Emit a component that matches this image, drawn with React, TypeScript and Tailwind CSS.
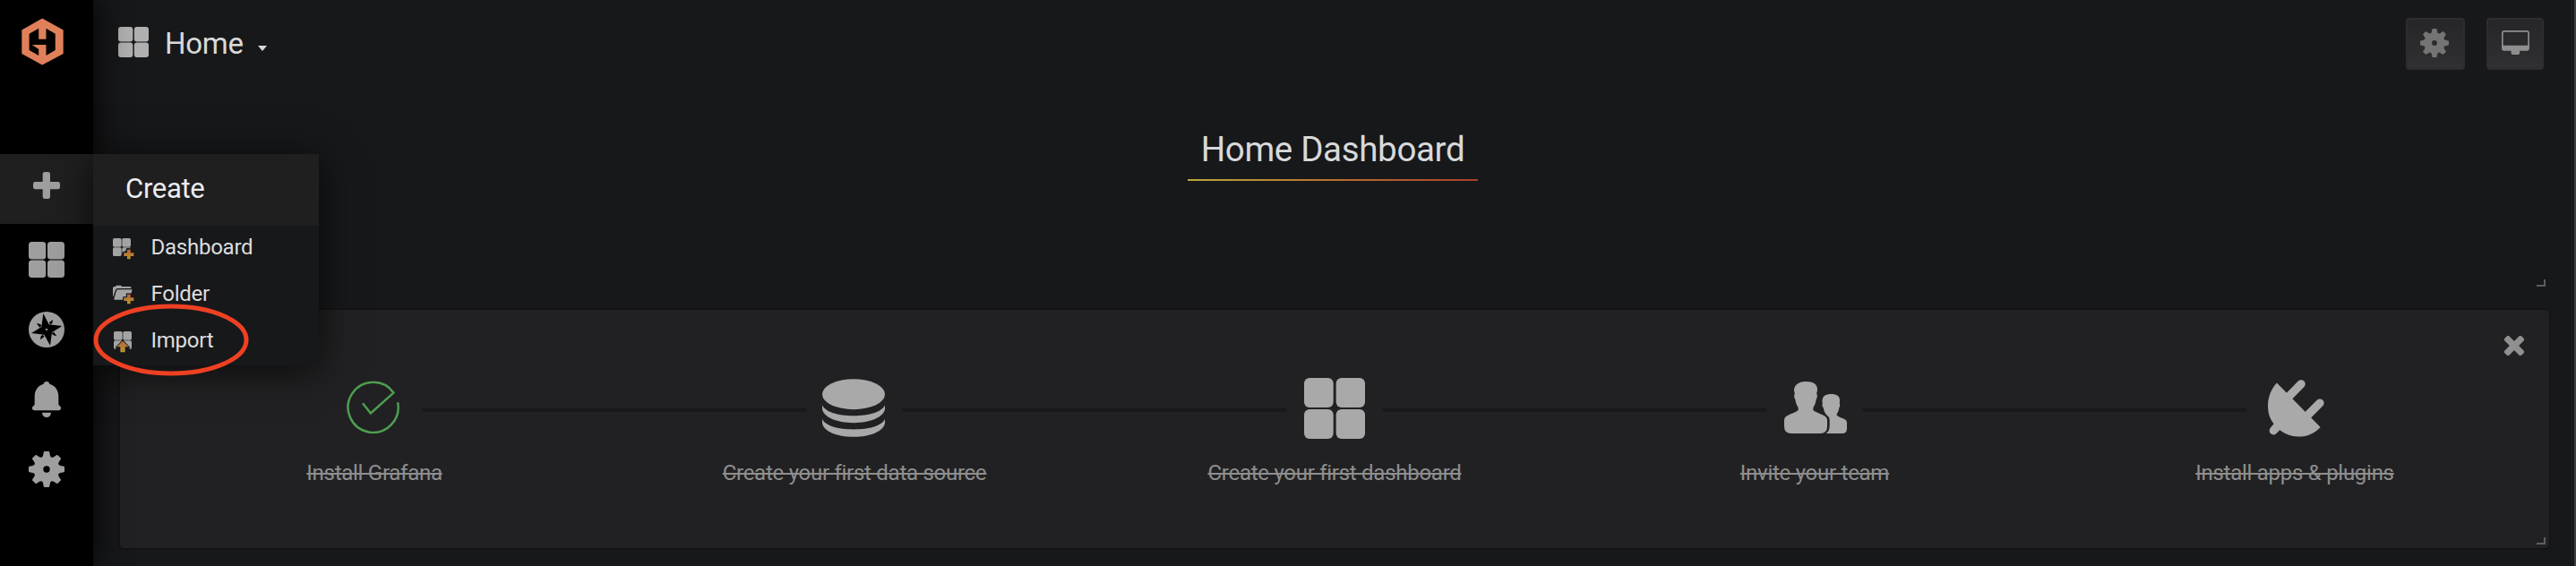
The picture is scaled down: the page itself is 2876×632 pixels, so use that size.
import type { ReactNode } from "react";

function GridIcon({ className }: { className: string }) {
  return (
    <svg viewBox="0 0 204 204" className={className} fill="currentColor">
      <rect x="0" y="0" width="98" height="99" rx="18" />
      <rect x="107" y="0" width="97" height="99" rx="18" />
      <rect x="0" y="105" width="98" height="99" rx="18" />
      <rect x="107" y="105" width="97" height="99" rx="18" />
    </svg>
  );
}

const TEETH = [0, 45, 90, 135, 180, 225, 270, 315];

function GearIcon({ className, id }: { className: string; id: string }) {
  return (
    <svg viewBox="-60 -60 120 120" className={className} fill="currentColor">
      <mask id={id}>
        <rect x="-60" y="-60" width="120" height="120" fill="white" />
        <circle r="11" fill="black" />
      </mask>
      <g mask={`url(#${id})`}>
        <circle r="42" />
        {TEETH.map((a) => (
          <path
            key={a}
            transform={`rotate(${a})`}
            d="M-7-60H7Q9-60 9.500-58L12-46Q13-42 17-39L0-20L-17-39Q-13-42-12-46L-9.500-58Q-9-60-7-60Z"
          />
        ))}
      </g>
    </svg>
  );
}

function Logo() {
  return (
    <svg viewBox="71 60 142 159" className="h-[53px] w-[47px]">
      <path
        fill="#e0805a"
        fillRule="evenodd"
        d="M141 61L212 100V180L141 218L72 180V100ZM129 131H154V95L185 113V168L154 186V150H107L129 165V186L97 168V113L129 95Z"
      />
    </svg>
  );
}

function PlusIcon() {
  return (
    <svg viewBox="0 0 90 90" className="h-[30px] w-[30px]" fill="currentColor">
      <rect x="32" y="0" width="25" height="90" rx="7" />
      <rect x="0" y="33" width="90" height="25" rx="7" />
    </svg>
  );
}

function CompassIcon() {
  return (
    <svg viewBox="96 24 120 120" className="h-10 w-10">
      <circle cx="156" cy="84" r="60" fill="currentColor" />
      <g fill="#000">
        <path d="M145 30L164 67L208 72L174 94L168 137L148 101L105 96L139 75Z" />
        <path d="M177 51L175 63L168 67L165 60Z" />
        <path d="M122 63L135 66L139 71L133 77Z" />
        <path d="M190 106L179 103L173 97L180 92Z" />
        <path d="M135 118L137 106L144 101L148 108Z" />
      </g>
      <circle cx="156" cy="84" r="3.500" fill="currentColor" />
    </svg>
  );
}

function BellIcon() {
  return (
    <svg viewBox="96 258 120 120" className="h-10 w-10" fill="currentColor">
      <path d="M156 258C161 258 165 261 166 266C186 272 196 288 196 308V332Q196 339 200 340A8 8 0 0 1 197 355H115A8 8 0 0 1 112 340Q116 339 116 332V308C116 288 126 272 146 266C147 261 151 258 156 258Z" />
      <path d="M141 362H171A15 16 0 0 1 141 362Z" />
    </svg>
  );
}

function MonitorIcon() {
  return (
    <svg viewBox="0 0 94 82" className="h-[27px] w-[31px]">
      <path
        fill="currentColor"
        fillRule="evenodd"
        d="M9 0H85Q94 0 94 9V60Q94 69 85 69H61V77Q61 82 56 82H37Q32 82 32 77V69H9Q0 69 0 60V9Q0 0 9 0ZM9 5Q5 5 5 9V51H89V9Q89 5 85 5Z"
      />
    </svg>
  );
}

function AccentGradient({ id }: { id: string }) {
  return (
    <linearGradient id={id} x1="0" y1="0" x2="0" y2="1">
      <stop offset="0" stopColor="#b8663e" />
      <stop offset="1" stopColor="#b6942f" />
    </linearGradient>
  );
}

function SmallPlus({ id }: { id: string }) {
  return (
    <>
      <AccentGradient id={id} />
      <path
        d="M48 38H59V49H70V60H59V70H48V60H37V49H48Z"
        fill={`url(#${id})`}
        stroke="#17181a"
        strokeWidth="7"
        paintOrder="stroke"
      />
    </>
  );
}

function NewDashboardIcon() {
  return (
    <svg viewBox="0 0 72 72" className="h-6 w-6" fill="#a3a3a3">
      <rect x="0" y="0" width="29" height="29" rx="5" />
      <rect x="31" y="0" width="29" height="29" rx="5" />
      <rect x="0" y="31" width="29" height="29" rx="5" />
      <path d="M36 31H55Q60 31 60 34H46L43 43L34 46L31 52V36Q31 31 36 31Z" />
      <SmallPlus id="accent-dashboard" />
    </svg>
  );
}

function NewFolderIcon() {
  return (
    <svg viewBox="0 0 72 72" className="-mt-1 h-6 w-6">
      <path
        fill="#a3a3a3"
        d="M5 12H8L12 8H27L31 12H57Q62 12 62 18H16Q11 18 9 23L1 46Q0 46 0 42V17Q0 12 5 12Z"
      />
      <path fill="#a3a3a3" d="M18 22H65L57 52Q56 56 51 56H6Q3 56 4 52L12 26Q13 22 18 22Z" />
      <SmallPlus id="accent-folder" />
    </svg>
  );
}

function ImportIcon() {
  return (
    <svg viewBox="-3 0 72 72" className="h-6 w-6" fill="#a3a3a3">
      <rect x="0" y="0" width="29" height="29" rx="5" />
      <rect x="31" y="0" width="29" height="29" rx="5" />
      <path d="M5 31H24Q29 31 28 35L9 54Q6 57 6 60Q0 60 0 55V36Q0 31 5 31Z" />
      <path d="M55 31H36Q31 31 32 35L51 54Q54 57 54 60Q60 60 60 55V36Q60 31 55 31Z" />
      <AccentGradient id="accent-import" />
      <path
        d="M30 32L50 52H38V70H22V52H10Z"
        fill="url(#accent-import)"
        stroke="#17181a"
        strokeWidth="5"
        paintOrder="stroke"
      />
    </svg>
  );
}

function CheckIcon() {
  return (
    <svg viewBox="201 74 178 178" className="h-[59px] w-[59px]" fill="none" stroke="#4f9e50" strokeWidth="7.500">
      <path d="M373 147A84.500 84.500 0 1 1 359 115L282 184L255 150" />
    </svg>
  );
}

function DatabaseIcon() {
  return (
    <svg viewBox="414 69 210 194" className="h-[65px] w-[70px]" fill="currentColor">
      <ellipse cx="519" cy="120" rx="105" ry="51" />
      <path d="M414 156C424 179 466 192 519 192S614 179 624 156V169C621 196 576 216 519 216S417 196 414 169Z" />
      <path d="M414 203C424 226 466 238 519 238S614 226 624 203V216C621 243 576 263 519 263S417 243 414 216Z" />
    </svg>
  );
}

function UsersIcon() {
  return (
    <svg viewBox="276 78 210 174" className="h-[58px] w-[70px]" fill="currentColor">
      <path d="M348 78C374 78 387 88 387 104C387 110 386 114 384 118C388 122 387 133 383 138C381 151 378 158 373 166V174C382 182 397 185 410 193Q420 199 420 208V228Q420 252 396 252H300Q276 252 276 228V208Q276 199 286 193C299 185 314 182 323 174V166C318 158 315 151 313 138C309 133 308 122 312 118C310 114 309 110 309 104C311 92 322 78 348 78Z" />
      <path d="M433 120C452 120 462 127 462 140C462 145 462 148 461 151C464 155 463 162 460 166C459 175 456 181 452 187V191C458 196 468 199 478 204Q486 208 486 215V236Q486 252 470 252H416Q428 244 428 228V208Q428 196 419 191C413 186 409 177 407 166C403 162 402 155 405 151C403 147 403 142 404 138C406 127 415 120 433 120Z" />
    </svg>
  );
}

function PlugIcon() {
  return (
    <svg viewBox="336 70 190 192" className="h-[64px] w-[63px]" fill="currentColor">
      <path d="M366 80L513 229C492 252 464 262 437 261C414 260 394 253 376 239L363 252C354 259 341 253 341 241Q341 236 345 231L356 218C342 200 336 181 336 156C337 127 346 102 366 80Z" />
      <g stroke="currentColor" strokeWidth="28" strokeLinecap="round">
        <path d="M400 133L448 84" />
        <path d="M463 196L511 148" />
      </g>
    </svg>
  );
}

function CloseIcon() {
  return (
    <svg viewBox="0 0 66 66" className="h-[22px] w-[22px]" fill="#909091">
      <rect x="-7" y="22" width="80" height="22" rx="6" transform="rotate(45 33 33)" />
      <rect x="-7" y="22" width="80" height="22" rx="6" transform="rotate(-45 33 33)" />
    </svg>
  );
}

function ResizeHandle({ className }: { className: string }) {
  return <span className={`absolute h-2 w-2.5 border-r-2 border-b-2 border-[#5c5d5e] ${className}`} />;
}

function SideItem({ children, active }: { children: ReactNode; active?: boolean }) {
  return (
    <div
      className={`flex h-[78px] items-center justify-center text-[#9f9f9f] ${
        active ? "bg-[#1f1f1f] pb-2" : "pt-0.5"
      }`}
    >
      {children}
    </div>
  );
}

function MenuItem({ icon, label }: { icon: ReactNode; label: string }) {
  return (
    <div className="flex h-[52px] items-center gap-[18.5px] pl-[22px]">
      {icon}
      <span className="pb-1 text-[24px] leading-7 tracking-[-0.25px] text-[#dcddde]">{label}</span>
    </div>
  );
}

const STEPS = [
  { label: "Install Grafana", icon: <CheckIcon />, shift: "-ml-[3px] pb-2" },
  { label: "Create your first data source", icon: <DatabaseIcon />, shift: "-ml-[2px] pb-[5px]" },
  { label: "Create your first dashboard", icon: <GridIcon className="h-[68px] w-[68px]" />, shift: "pb-1" },
  { label: "Invite your team", icon: <UsersIcon />, shift: "ml-[2px] pb-1.5" },
  { label: "Install apps & plugins", icon: <PlugIcon />, shift: "ml-[3px] pb-[5px]" },
];

export default function App() {
  return (
    <div className="relative flex h-[632px] w-[2876px] overflow-hidden bg-[#17181a] font-['Roboto',sans-serif]">
      <aside className="relative z-10 flex w-[104px] shrink-0 flex-col bg-black shadow-[0_0_40px_#000]">
        <div className="h-[172px] pl-6 pt-5">
          <Logo />
        </div>
        <SideItem active>
          <PlusIcon />
        </SideItem>
        <SideItem>
          <GridIcon className="h-10 w-10" />
        </SideItem>
        <SideItem>
          <CompassIcon />
        </SideItem>
        <SideItem>
          <BellIcon />
        </SideItem>
        <SideItem>
          <GearIcon id="gear-side" className="h-10 w-10" />
        </SideItem>

        <div className="absolute left-[104px] top-[172px] h-[236px] w-[252px] bg-[#17181a] shadow-[0_5px_40px_#000000b0]">
          <div className="flex h-20 items-center bg-[#1f1f1f] pb-px pl-9 text-[31px] tracking-[-0.3px] text-[#ececf2]">
            Create
          </div>
          <MenuItem icon={<NewDashboardIcon />} label="Dashboard" />
          <MenuItem icon={<NewFolderIcon />} label="Folder" />
          <MenuItem icon={<ImportIcon />} label="Import" />
        </div>
        <svg className="absolute left-[104px] top-[338px] h-[84px] w-[176px]" viewBox="104 338 176 84" fill="none">
          <ellipse cx="191" cy="379.500" rx="84" ry="37.500" stroke="#ee4023" strokeWidth="5" />
        </svg>
      </aside>

      <main className="flex flex-1 flex-col">
        <header className="flex h-[98px] items-start pl-7 pr-[34px] pt-5">
          <div className="flex flex-1 items-center pt-1.5">
            <GridIcon className="-mt-1 h-[34px] w-[34px] text-[#b0b0b0]" />
            <span className="ml-[18px] text-[33px] leading-[46px] tracking-[-0.3px] text-[#d8d9da]">Home</span>
            <svg viewBox="0 0 10 6" className="ml-4 mt-2.5 h-1.5 w-2.5" fill="#d8d9da">
              <path d="M0 0H10L5 6Z" />
            </svg>
          </div>
          <div className="mr-6 flex h-[58px] w-[66px] items-center justify-center rounded-[4px] border-2 border-[#2d2d2f] bg-linear-to-b from-[#262628] to-[#303032] pb-[2px] pr-[2px] text-[#747475]">
            <GearIcon id="gear-top" className="h-8 w-8" />
          </div>
          <div className="flex h-[58px] w-16 items-center justify-center rounded-[4px] border-2 border-[#2d2d2f] bg-linear-to-b from-[#262628] to-[#303032] pb-1 text-[#8f8f90]">
            <MonitorIcon />
          </div>
        </header>

        <section className="relative ml-[30px] mr-8 flex h-[230px] justify-center pt-[42px]">
          <div className="flex h-[62px] w-[324px] flex-col justify-between">
            <h1 className="pt-1 text-center text-[38.5px] leading-[46px] tracking-[-0.33px] text-[#d8d9da]">
              Home Dashboard
            </h1>
            <div className="h-0.5 bg-linear-to-r from-[#b8a73e] via-[#b8702f] to-[#a83f2a]" />
          </div>
          <ResizeHandle className="bottom-2 right-0" />
        </section>

        <section className="relative ml-7 mr-[26px] mt-4 h-[270px] rounded-[6px] border-2 border-[#141414] bg-[#212123] px-4 pt-[74px]">
          <div className="flex">
            {STEPS.map((step, i) => (
              <div key={step.label} className="flex w-[536px] flex-col">
                <div className="flex h-[76px] items-center">
                  <span className={`h-1 flex-1 ${i > 0 ? "bg-[#17181a]" : ""}`} />
                  <span className="flex w-[108px] justify-center text-[#a9a9a9]">
                    <span className={step.shift}>{step.icon}</span>
                  </span>
                  <span className={`h-1 flex-1 ${i < 4 ? "bg-[#17181a]" : ""}`} />
                </div>
                <span className="mt-4 text-center text-[24px] leading-8 tracking-[-0.27px] text-[#8e8e8e] line-through decoration-2">
                  {step.label}
                </span>
              </div>
            ))}
          </div>
          <span className="absolute right-[28px] top-[29px]">
            <CloseIcon />
          </span>
          <ResizeHandle className="bottom-1 right-1" />
        </section>
      </main>

      <div className="w-0.5 shrink-0 bg-[#3d3e40]" />
    </div>
  );
}
